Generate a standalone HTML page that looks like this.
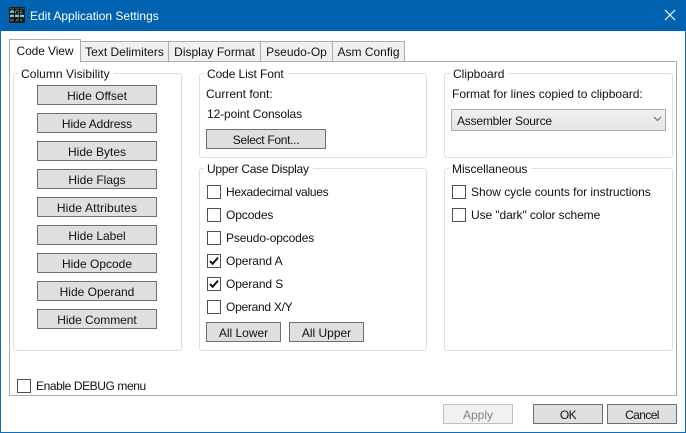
<!DOCTYPE html>
<html><head><meta charset="utf-8">
<style>
*{box-sizing:border-box}
html,body{margin:0;padding:0;background:#fff}
body{width:686px;height:433px;position:relative;overflow:hidden;font:12px "Liberation Sans",sans-serif;color:#000}
.a{position:absolute;white-space:nowrap}
.t{position:absolute;white-space:nowrap;line-height:16px;height:16px;color:#111}
.b{position:absolute;background:#dfdfdf;border:1px solid #707070;text-align:center;line-height:20px;height:20px;white-space:nowrap;color:#111}
.g{position:absolute;border:1px solid #dcdfe3;border-radius:3px}
.gl{position:absolute;background:#fff;padding:0 4px 0 3px;line-height:16px;height:16px;white-space:nowrap;color:#111}
.c{position:absolute;width:14px;height:14px;border:1px solid #505050;background:#fff}
.tab{position:absolute;top:41px;height:21px;background:#f0f0f0;border:1px solid #acacac;text-align:center;line-height:20px;white-space:nowrap;color:#111}
</style></head><body>
<div class="a" style="left:0;top:0;width:686px;height:433px;border:1px solid #0a6ebd;border-top:0"></div>
<div class="a" style="left:0;top:0;width:686px;height:31px;background:#0063b1"></div>
<svg class="a" style="left:9px;top:7px" width="16" height="16" viewBox="0 0 16 16"><rect width="16" height="16" fill="#1c1c1c"/><rect x="1" y="1" width="14" height="1" fill="#4a4a4a"/><rect x="2" y="3" width="3" height="1" fill="#8a8a8a"/><rect x="7" y="3" width="6" height="1" fill="#6a6a6a"/><rect x="1" y="4" width="6" height="2" fill="#5fb8c0"/><rect x="9" y="5" width="4" height="1" fill="#5fb8c0"/><rect x="2" y="7" width="12" height="1" fill="#444"/><rect x="1" y="8" width="14" height="2" fill="#6fd0d8"/><rect x="1" y="12" width="4" height="2" fill="#555"/><rect x="7" y="12" width="6" height="2" fill="#555"/><rect x="5" y="1" width="1" height="14" fill="#000"/><rect x="10" y="1" width="1" height="14" fill="#000"/></svg>
<div class="t" style="left:30px;top:8px;color:#fff;font-size:12px">Edit Application Settings</div>
<svg class="a" style="left:664px;top:9px" width="14" height="14" viewBox="0 0 14 14"><path d="M1 1L11 11M11 1L1 11" stroke="#fff" stroke-width="1.1" fill="none"/></svg>

<div class="a" style="left:9px;top:61px;width:668px;height:335px;border:1px solid #acacac;background:#fff"></div>
<div class="tab" style="left:80px;width:89px">Text Delimiters</div>
<div class="tab" style="left:168px;width:93px">Display Format</div>
<div class="tab" style="left:260px;width:73px">Pseudo-Op</div>
<div class="tab" style="left:332px;width:73px">Asm Config</div>
<div class="tab" style="left:9px;top:39px;width:72px;height:23px;background:#fff;border-bottom:0;line-height:22px;letter-spacing:-.1px">Code View</div>

<div class="g" style="left:13px;top:73px;width:169px;height:278px"></div>
<div class="gl" style="left:18px;top:66px;letter-spacing:.05px">Column Visibility</div>
<div class="b" style="left:37px;top:85px;width:120px">Hide Offset</div>
<div class="b" style="left:37px;top:113px;width:120px;letter-spacing:-.1px">Hide Address</div>
<div class="b" style="left:37px;top:141px;width:120px">Hide Bytes</div>
<div class="b" style="left:37px;top:169px;width:120px">Hide Flags</div>
<div class="b" style="left:37px;top:197px;width:120px;letter-spacing:.15px">Hide Attributes</div>
<div class="b" style="left:37px;top:225px;width:120px">Hide Label</div>
<div class="b" style="left:37px;top:253px;width:120px">Hide Opcode</div>
<div class="b" style="left:37px;top:281px;width:120px">Hide Operand</div>
<div class="b" style="left:37px;top:309px;width:120px;letter-spacing:-.05px">Hide Comment</div>

<div class="g" style="left:199px;top:73px;width:228px;height:85px"></div>
<div class="gl" style="left:204px;top:66px;letter-spacing:-.1px">Code List Font</div>
<div class="t" style="left:206px;top:86px">Current font:</div>
<div class="t" style="left:207px;top:106px;letter-spacing:-.1px">12-point Consolas</div>
<div class="b" style="left:206px;top:129px;width:120px;letter-spacing:-.3px">Select Font...</div>

<div class="g" style="left:199px;top:168px;width:228px;height:183px"></div>
<div class="gl" style="left:204px;top:161px;letter-spacing:-.28px">Upper Case Display</div>
<div class="c" style="left:207px;top:185px"></div><div class="t" style="left:226px;top:184px;letter-spacing:-.28px">Hexadecimal values</div>
<div class="c" style="left:207px;top:208px"></div><div class="t" style="left:226px;top:207px;letter-spacing:-.1px">Opcodes</div>
<div class="c" style="left:207px;top:231px"></div><div class="t" style="left:226px;top:230px;letter-spacing:-.14px">Pseudo-opcodes</div>
<div class="c" style="left:207px;top:254px"></div><div class="t" style="left:226px;top:253px;letter-spacing:-.1px">Operand A</div>
<svg class="a" style="left:207px;top:254px" width="14" height="14" viewBox="0 0 14 14"><path d="M3 7L5.6 9.8L11 3.6" stroke="#111" stroke-width="2" fill="none"/></svg>
<div class="c" style="left:207px;top:277px"></div><div class="t" style="left:226px;top:276px;letter-spacing:-.1px">Operand S</div>
<svg class="a" style="left:207px;top:277px" width="14" height="14" viewBox="0 0 14 14"><path d="M3 7L5.6 9.8L11 3.6" stroke="#111" stroke-width="2" fill="none"/></svg>
<div class="c" style="left:207px;top:300px"></div><div class="t" style="left:226px;top:299px;letter-spacing:-.27px">Operand X/Y</div>
<div class="b" style="left:206px;top:322px;width:75px">All Lower</div>
<div class="b" style="left:289px;top:322px;width:75px">All Upper</div>

<div class="g" style="left:444px;top:73px;width:229px;height:85px"></div>
<div class="gl" style="left:450px;top:66px">Clipboard</div>
<div class="t" style="left:452px;top:86px">Format for lines copied to clipboard:</div>
<div class="a" style="left:451px;top:109px;width:215px;height:22px;border:1px solid #acacac;background:linear-gradient(#f0f0f0,#e5e5e5);line-height:22px;padding-left:5px;color:#111;letter-spacing:-.2px">Assembler Source</div>
<svg class="a" style="left:653px;top:116px" width="9" height="6" viewBox="0 0 9 6"><path d="M1 1L4.5 4.5L8 1" stroke="#666" stroke-width="1" fill="none"/></svg>

<div class="g" style="left:444px;top:168px;width:229px;height:183px"></div>
<div class="gl" style="left:449px;top:161px;letter-spacing:-.05px">Miscellaneous</div>
<div class="c" style="left:452px;top:185px"></div><div class="t" style="left:471px;top:184px;letter-spacing:-.03px">Show cycle counts for instructions</div>
<div class="c" style="left:452px;top:208px"></div><div class="t" style="left:471px;top:207px;letter-spacing:-.09px">Use "dark" color scheme</div>

<div class="c" style="left:17px;top:379px"></div><div class="t" style="left:36px;top:378px;letter-spacing:-.41px">Enable DEBUG menu</div>

<div class="b" style="left:443px;top:404px;width:70px;background:#f1f1f1;border-color:#bfbfbf;color:#838383">Apply</div>
<div class="b" style="left:533px;top:404px;width:70px;letter-spacing:-.5px">OK</div>
<div class="b" style="left:607px;top:404px;width:70px;letter-spacing:-.6px">Cancel</div>
</body></html>
